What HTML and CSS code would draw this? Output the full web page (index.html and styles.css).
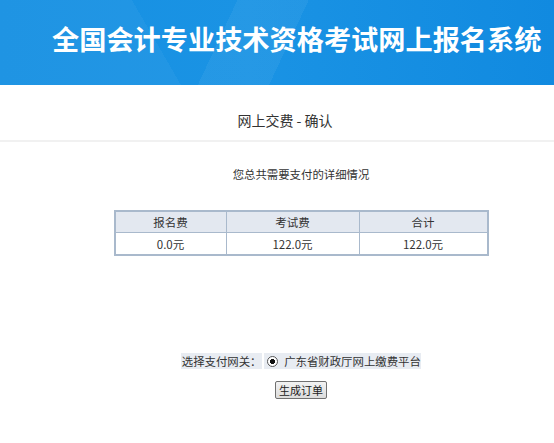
FILE: index.html
```html
<!DOCTYPE html>
<html lang="zh-CN">
<head>
<meta charset="utf-8">
<title>全国会计专业技术资格考试网上报名系统</title>
<link rel="stylesheet" href="styles.css">
</head>
<body>
<header class="banner">
  <h1 class="banner-title">全国会计专业技术资格考试网上报名系统</h1>
</header>
<section class="page-head">
  <h2 class="page-title">网上交费 - 确认</h2>
</section>
<main class="content">
  <p class="intro">您总共需要支付的详细情况</p>
  <table class="fee-table">
    <thead>
      <tr><th class="c1">报名费</th><th class="c2">考试费</th><th class="c3">合计</th></tr>
    </thead>
    <tbody>
      <tr><td>0.0元</td><td>122.0元</td><td>122.0元</td></tr>
    </tbody>
  </table>
  <table class="gateway">
    <tr>
      <td class="gw-label">选择支付网关：</td>
      <td class="gw-option"><span class="radio"></span>广东省财政厅网上缴费平台</td>
    </tr>
  </table>
  <div class="actions"><button class="btn" type="button">生成订单</button></div>
</main>
</body>
</html>
```
FILE: styles.css
```css
html, body {
  margin: 0;
  padding: 0;
  background: #fff;
  font-family: "Noto Sans CJK SC", "Noto Sans", sans-serif;
  color: #333;
  overflow: hidden;
}
.banner {
  height: 85px;
  background:
    linear-gradient(115deg, rgba(255,255,255,0) 0 40%, rgba(255,255,255,0.05) 40% 52%, rgba(255,255,255,0) 52%),
    linear-gradient(60deg, rgba(255,255,255,0.04) 0 30%, rgba(255,255,255,0) 30%),
    linear-gradient(90deg, #1690e2 0%, #1a93e4 45%, #118ae0 100%);
  box-sizing: border-box;
  padding: 23px 0 0 52px;
}
.banner-title {
  margin: 0;
  font-size: 27.2px;
  line-height: 30px;
  letter-spacing: 0;
  font-weight: 700;
  color: #fff;
  white-space: nowrap;
}
.page-head {
  height: 57px;
  box-sizing: border-box;
  padding: 24px 0 0 16px;
  border-bottom: 2px solid #f1f1f1;
  text-align: center;
}
.page-title {
  margin: 0;
  font-size: 14px;
  line-height: 22px;
  font-weight: 400;
  color: #333;
}
.content {
  padding-left: 48px;
  display: flex;
  flex-direction: column;
  align-items: center;
}
.intro {
  margin: 22px 0 0;
  font-size: 11.4px;
  line-height: 20px;
  color: #333;
}
.fee-table {
  margin-top: 26px;
  width: 375px;
  border-collapse: collapse;
  border: 2px solid #a9b9cc;
  font-size: 11.5px;
  color: #333;
}
.fee-table th, .fee-table td {
  border: 1px solid #a9b9cc;
  text-align: center;
  padding: 0;
  font-weight: 400;
}
.fee-table th {
  height: 20px;
  background: #e3e8f0;
}
.fee-table td {
  height: 21px;
  background: #fff;
}
.fee-table .c1 { width: 110px; }
.fee-table .c2 { width: 132px; }
.gateway {
  margin-top: 95px;
  border-spacing: 2px;
  font-size: 11.4px;
  color: #333;
}
.gateway td {
  height: 16px;
  padding: 0;
  background: #e8ecf2;
  line-height: 16px;
  white-space: nowrap;
}
.gw-label {
  width: 81px;
  text-align: center;
}
.gw-option {
  width: 153px;
}
.radio {
  display: inline-block;
  width: 9px;
  height: 9px;
  margin: 0 6px 0 3px;
  border: 1px solid #555;
  border-radius: 50%;
  background: radial-gradient(circle, #111 0 2.4px, #fff 2.6px);
  vertical-align: -1px;
  box-sizing: content-box;
}
.actions {
  display: flex;
  margin-top: 10px;
}
.btn {
  width: 52px;
  height: 18px;
  padding: 0;
  font-family: inherit;
  font-size: 11px;
  line-height: 14px;
  color: #222;
  border: 1px solid #707070;
  border-radius: 2px;
  background: linear-gradient(#f2f2f2, #dcdcdc);
}
```
